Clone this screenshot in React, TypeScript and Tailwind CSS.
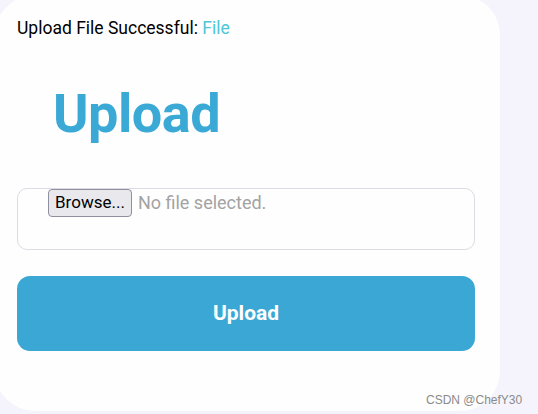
import React from 'react';

export default function App() {
  return (
    <div className="w-[538px] h-[414px] overflow-hidden bg-[#f5f4fd] relative font-['Roboto',sans-serif]">
      {/* Card */}
      <div className="ml-[-5px] mt-[-5px] w-[505px] h-[416px] rounded-[40px] bg-[#fefefe] pl-[22px] pt-[23px]">
        <div className="w-[458px]">
          <p className="text-[17.5px] leading-[20px] text-black">
            Upload File Successful: <span className="text-[#4dc6d6]">File</span>
          </p>

          <h1 className="mt-[46px] ml-[36px] text-[54px] leading-[60px] font-bold text-[#3aa9d6] tracking-[-0.5px]">
            Upload
          </h1>

          {/* File input */}
          <div className="mt-[44px] h-[62px] rounded-[10px] border border-[#dcdce4] pl-[30px] flex items-start">
            <span className="h-[28px] px-[6px] flex items-center rounded-[4px] border border-[#8f8f9d] bg-[#e9e9ed] text-[17px] text-black">
              Browse...
            </span>
            <span className="ml-[6px] text-[18px] leading-[28px] text-[#a3a3a3]">No file selected.</span>
          </div>

          <button className="mt-[26px] w-full h-[75px] rounded-[13px] bg-[#3ba7d4] text-white text-[21px] font-bold">
            Upload
          </button>
        </div>
      </div>

      <span className="absolute left-[426px] top-[391px] text-[12px] text-[#8a8a8a] font-['Liberation_Sans',sans-serif]">
        CSDN @ChefY30
      </span>
    </div>
  );
}
